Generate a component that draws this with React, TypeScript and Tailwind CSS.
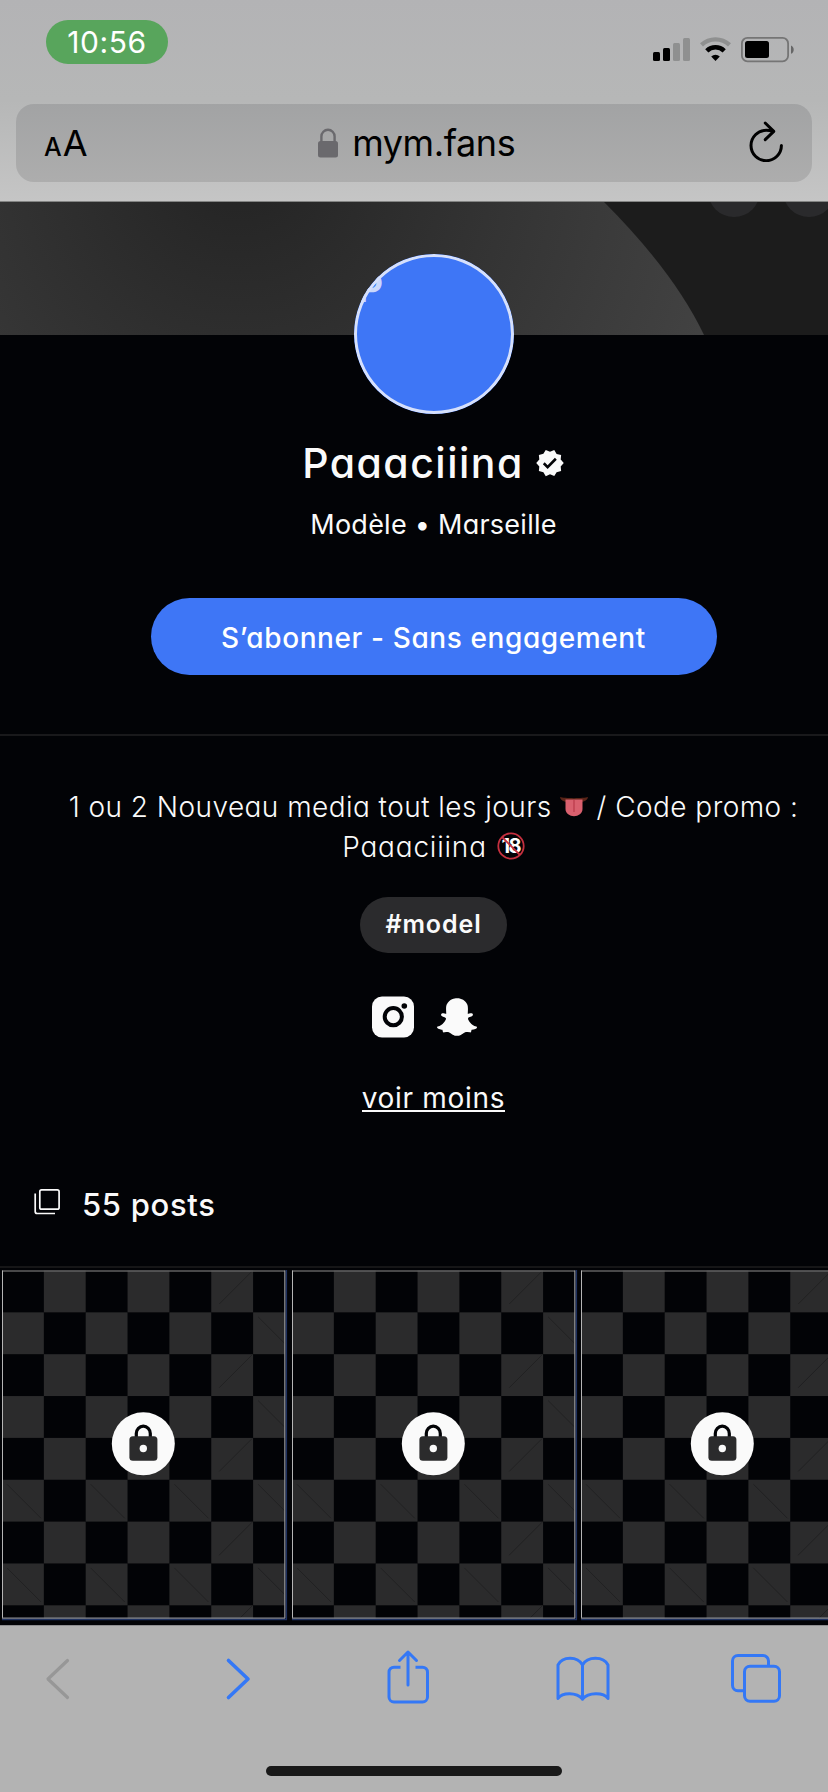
import { MdVerified } from 'react-icons/md';
import { FaSnapchatGhost } from 'react-icons/fa';

const CELL = 41.85;

const StatusBar = () => (
  <div className="flex h-[104px] items-start justify-between pl-[46px] pr-[34px]">
    <div className="mt-5 flex h-11 w-[122px] items-center justify-center rounded-full bg-[#58a55c] text-[30px] leading-none tracking-[0.6px] text-white">
      10:56
    </div>
    <div className="mt-[37px] flex items-start">
      <svg width="37" height="26" viewBox="0 0 37 26">
        <rect x="0" y="15" width="7" height="9" rx="1.5" fill="#000" />
        <rect x="10" y="11" width="7" height="13" rx="1.5" fill="#000" />
        <rect x="20" y="6" width="7" height="18" rx="1.5" fill="#8f9090" />
        <rect x="30" y="1" width="7" height="23" rx="1.5" fill="#8f9090" />
      </svg>
      <svg className="ml-[10px]" width="31" height="26" viewBox="0 0 31 26" fill="none">
        <path d="M1.5 7.9a20.4 20.4 0 0 1 28 0" stroke="#8f9090" strokeWidth="4.4" />
        <path d="M6.8 13.8a12.6 12.6 0 0 1 17.4 0" stroke="#000" strokeWidth="4.6" />
        <path d="M15.5 24l-4.3-4.6a6.4 6.4 0 0 1 8.6 0z" fill="#000" />
      </svg>
      <svg className="ml-[10px]" width="53" height="26" viewBox="0 0 53 26">
        <rect x="0.9" y="0.9" width="46.2" height="23.4" rx="5.5" fill="none" stroke="#757575" strokeWidth="1.8" />
        <rect x="4" y="4" width="24" height="17" rx="2.5" fill="#000" />
        <path d="M50 8.6c3.6 1.4 3.6 6.8 0 8.2z" fill="#666" />
      </svg>
    </div>
  </div>
);

const AddressBar = () => (
  <div className="mx-4 flex h-[78px] items-center justify-between rounded-[18px] bg-linear-to-b from-[#a2a3a4] to-[#adadad] pl-[28px] pr-[28px]">
    <div className="flex w-[60px] items-baseline gap-px leading-none text-black">
      <span className="text-[25px] font-medium">A</span>
      <span className="text-[36px]">A</span>
    </div>
    <div className="flex items-center pl-[5px]">
      <svg width="20" height="30" viewBox="0 0 20 30" fill="none">
        <path d="M3.4 14V8.4a6.6 6.6 0 0 1 13.2 0V14" stroke="#6a696d" strokeWidth="2.4" />
        <rect x="0" y="13" width="20" height="16.5" rx="2.5" fill="#6a696d" />
      </svg>
      <span className="ml-[14.5px] text-[36px] leading-none tracking-[-0.4px] text-black">mym.fans</span>
    </div>
    <div className="flex w-[60px] justify-end">
      <svg className="-mt-1" width="36" height="42" viewBox="0 0 36 42" fill="none" stroke="#000" strokeWidth="3" strokeLinecap="round" strokeLinejoin="round">
        <path d="M33.4 25.5A15.2 15.2 0 1 1 18.2 10.3c2.4 0 4.6.4 6.8 1.2" />
        <path d="M17.2 3l8.6 8.4-8.6 8.2" />
      </svg>
    </div>
  </div>
);

const Cover = () => (
  <svg className="block" width="828" height="133" viewBox="0 202 828 133">
    <defs>
      <radialGradient id="cover" gradientUnits="userSpaceOnUse" cx="240" cy="160" r="490">
        <stop offset="0" stopColor="#232323" />
        <stop offset="1" stopColor="#424242" />
      </radialGradient>
    </defs>
    <rect x="0" y="202" width="828" height="133" fill="#1c1c1c" />
    <path d="M0 202H604Q674 272 704 335H0Z" fill="url(#cover)" />
    <circle cx="734" cy="191" r="26" fill="#2a2a2c" />
    <circle cx="809" cy="191" r="26" fill="#2a2a2c" />
  </svg>
);

const Tongue = () => (
  <svg className="ml-[8px] mr-[9px] inline-block align-[-1px]" width="28" height="22" viewBox="0 0 28 22">
    <path d="M0 1c4 1.500 24 1.500 28 0-.5 3.500-4 5-8 5H8C4 6 .5 4.500 0 1z" fill="#5a2418" />
    <path d="M5.500 3.500h17V13c0 9.500-17 9.500-17 0z" fill="#d9606e" />
    <path d="M14 4v12" stroke="#b93a4a" strokeWidth="1.200" />
  </svg>
);

const NoMinors = () => (
  <span className="relative -top-[6px] ml-[10px] inline-flex h-7 w-7 items-center justify-center align-[-2px]">
    <span className="text-[20px] font-bold leading-none tracking-[-1.5px] text-white">18</span>
    <svg className="absolute inset-0" width="28" height="28" viewBox="0 0 28 28" fill="none" stroke="#c5303f" strokeWidth="1.800">
      <circle cx="14" cy="14" r="12.700" />
      <path d="M5 5l18 18" />
    </svg>
  </span>
);

const Instagram = () => (
  <svg width="42" height="42" viewBox="0 0 42 42">
    <rect width="42" height="41" y="0.500" rx="10" fill="#fafafa" />
    <circle cx="21.300" cy="20.700" r="8.600" fill="none" stroke="#020306" strokeWidth="4" />
    <circle cx="32.300" cy="10" r="2.800" fill="#020306" />
  </svg>
);

// faint seams running across some of the grey squares
const seams = [
  [5, 0, 1], [5, 2, 1], [5, 4, 1], [5, 6, 1], [5, 8, 1],
  [6, 1, 0], [6, 3, 0],
  [0, 5, 0], [2, 5, 0], [4, 5, 0], [6, 5, 0],
  [0, 7, 0], [2, 7, 0], [4, 7, 0], [6, 7, 0],
];

const squares = Array.from({ length: 63 }, (_, i) => [i % 7, Math.floor(i / 7)]).filter(
  ([col, row]) => (col + row) % 2 === 1
);

const LockedPost = () => (
  <svg className="block shrink-0" width="286" height="355" viewBox="0 0 286 355">
    <svg x="0" y="0" width="283" height="348.500">
      {squares.map(([col, row]) => (
        <rect key={`${col}-${row}`} x={col * CELL} y={0.5 + row * CELL} width={CELL} height={CELL} fill="#2b2b2c" />
      ))}
      {seams.map(([col, row, rising]) => (
        <path
          key={`${col}-${row}`}
          d={rising ? `M${col * CELL + 8} ${row * CELL + 34}l33 -33` : `M${col * CELL + 5} ${row * CELL + 5}l34 34`}
          stroke="#1e1e1f"
          strokeWidth="0.800"
        />
      ))}
    </svg>
    <path d="M284.300 0V349.500H0" fill="none" stroke="#1e3161" strokeWidth="1.600" />
    <path d="M0 1H283" stroke="#606060" strokeWidth="1.600" />
    <path d="M0.500 0.500V348" stroke="#b5b5b5" strokeWidth="1" />
    <path d="M282.800 0.500V348" stroke="#9c9c9c" strokeWidth="1.100" />
    <path d="M0 348.200H283" stroke="#8a8d96" strokeWidth="1.200" />
    <circle cx="141.300" cy="173.800" r="31.500" fill="#fafafa" />
    <path d="M134.300 168v-4.500a7 7.300 0 0 1 14 0v4.500" fill="none" stroke="#020306" strokeWidth="3.200" />
    <rect x="127.400" y="166.300" width="28" height="24.500" rx="3.500" fill="#2b2b2c" />
    <circle cx="141.300" cy="178.500" r="3.700" fill="#fafafa" />
  </svg>
);

const Toolbar = () => (
  <footer className="flex h-[167px] flex-col items-center border-t border-[#8e8e90] bg-[#b3b3b3]">
    <div className="flex w-full justify-between pl-[30px] pr-[44px] pt-[23px]">
      <svg width="56" height="58" viewBox="30 1649 56 58" fill="none" stroke="#979797" strokeWidth="3.200" strokeLinecap="round" strokeLinejoin="round">
        <path d="M67.500 1660.500L48 1679l19.500 18.500" />
      </svg>
      <svg width="56" height="58" viewBox="204.500 1649 56 58" fill="none" stroke="#3478f6" strokeWidth="3.600" strokeLinecap="round" strokeLinejoin="round">
        <path d="M228 1660.500L247.500 1679L228 1697.500" />
      </svg>
      <svg width="56" height="58" viewBox="379 1649 56 58" fill="none" stroke="#3478f6" strokeWidth="3" strokeLinecap="butt" strokeLinejoin="round">
        <path d="M400.500 1667.200H394a5 5 0 0 0-5 5V1697a5 5 0 0 0 5 5H422.500a5 5 0 0 0 5-5V1672.200a5 5 0 0 0-5-5H415.500" />
        <path d="M408 1652V1685M399.500 1660.500L408 1652L416.500 1660.500" strokeLinecap="round" />
      </svg>
      <svg width="56" height="58" viewBox="553.500 1649 56 58" fill="none" stroke="#3478f6" strokeWidth="3" strokeLinecap="round" strokeLinejoin="round">
        <path d="M557.500 1698.500V1665C562 1656 577 1656 582 1665C587 1656 603 1656 607.500 1665V1698.500C603 1692 588 1692 582 1699C576 1692 562 1692 557.500 1698.500Z" />
        <path d="M582 1665V1699" />
      </svg>
      <svg width="56" height="58" viewBox="728 1649 56 58" fill="none" stroke="#3478f6" strokeWidth="3">
        <path d="M743.500 1690.700H738a5.500 5.500 0 0 1-5.500-5.500V1661a5.500 5.500 0 0 1 5.500-5.500H763a5.500 5.500 0 0 1 5.500 5.500V1666" />
        <rect x="744.500" y="1666.300" width="35" height="35" rx="5.500" />
      </svg>
    </div>
    <div className="mt-[59px] h-[10px] w-[296px] rounded-full bg-[#191919]" />
  </footer>
);

const App = () => {
  return (
    <div className="h-[1792px] w-[828px] overflow-hidden bg-[#020306] font-['Inter',sans-serif]">
      <header className="h-[202px] border-b border-[#838483] bg-linear-to-b from-[#b3b3b5] via-[#b6b7b7] to-[#c5c5c5]">
        <StatusBar />
        <AddressBar />
      </header>

      <main className="h-[1423px] overflow-hidden text-[#fafafa] [font-feature-settings:'cv11']">
        <Cover />
        {/* the page is a little wider than the screen and runs off to the right */}
        <div className="flex w-[867px] flex-col items-center">
          <div className="relative -mt-[81px] h-40 w-40 overflow-hidden rounded-full bg-[#3e76f6]">
            <span className="absolute left-[4px] top-[14px] text-[40px] font-semibold leading-none text-[#c9d8fb]">P</span>
            <div className="absolute inset-0 rounded-full border-[3px] border-[#d6e0fb]" />
          </div>

          <div className="mt-6 flex h-[50px] items-center gap-[11px]">
            <h1 className="text-[41px] font-medium leading-none tracking-[1.5px]">Paaaciiina</h1>
            <MdVerified size={30} />
          </div>
          <p className="mt-5 h-[34px] text-[27px] leading-[34px] tracking-[0.25px]">Modèle • Marseille</p>

          <button className="mt-[56px] h-[77px] w-[566px] rounded-full bg-[#3e76f6] pt-[3px] text-[28px] font-medium tracking-[0.6px] text-white">
            S’abonner - Sans engagement
          </button>

          <div className="mt-[59px] h-[2px] w-full bg-[#19191b]" />

          <div className="mt-[51px] whitespace-nowrap text-center text-[28px] font-light leading-10">
            <p className="h-10 tracking-[0.45px]">
              1 ou 2 Nouveau media tout les jours
              <Tongue />
              / Code promo :
            </p>
            <p className="h-10 tracking-[0.8px]">
              Paaaciiina
              <NoMinors />
            </p>
          </div>

          <div className="mt-[30px] flex h-14 w-[147px] items-center justify-center rounded-full bg-[#2b2b2d] text-[25px] font-semibold tracking-[0.9px]">
            #model
          </div>

          <div className="mt-[43px] flex h-[42px] w-[124px] items-center gap-[23px]">
            <Instagram />
            <FaSnapchatGhost size={40} />
          </div>

          <a className="mt-[43px] flex h-[31px] items-start border-b-2 border-[#fafafa] text-[28px] leading-[34px] tracking-[0.7px]">voir moins</a>
        </div>

        <div className="mt-[67px] flex h-[50px] items-center pl-[34px]">
          <svg className="-mt-1" width="26" height="26" viewBox="0 0 26 26" fill="none" stroke="#fafafa" strokeWidth="1.700">
            <rect x="5.800" y="0.900" width="19.300" height="19.300" rx="1.800" />
            <path d="M1.200 4.500V22.500a2 2 0 0 0 2 2H21" />
          </svg>
          <span className="ml-[22px] text-[31px] font-medium leading-none tracking-[0.7px]">55 posts</span>
        </div>

        <div className="mt-[37px] h-[2px] w-full bg-[#161617]" />
        <div className="mt-[2px] flex w-[867px] gap-[3.5px] pl-[2px]">
          <LockedPost />
          <LockedPost />
          <LockedPost />
        </div>
      </main>

      <Toolbar />
    </div>
  );
};

export default App;
